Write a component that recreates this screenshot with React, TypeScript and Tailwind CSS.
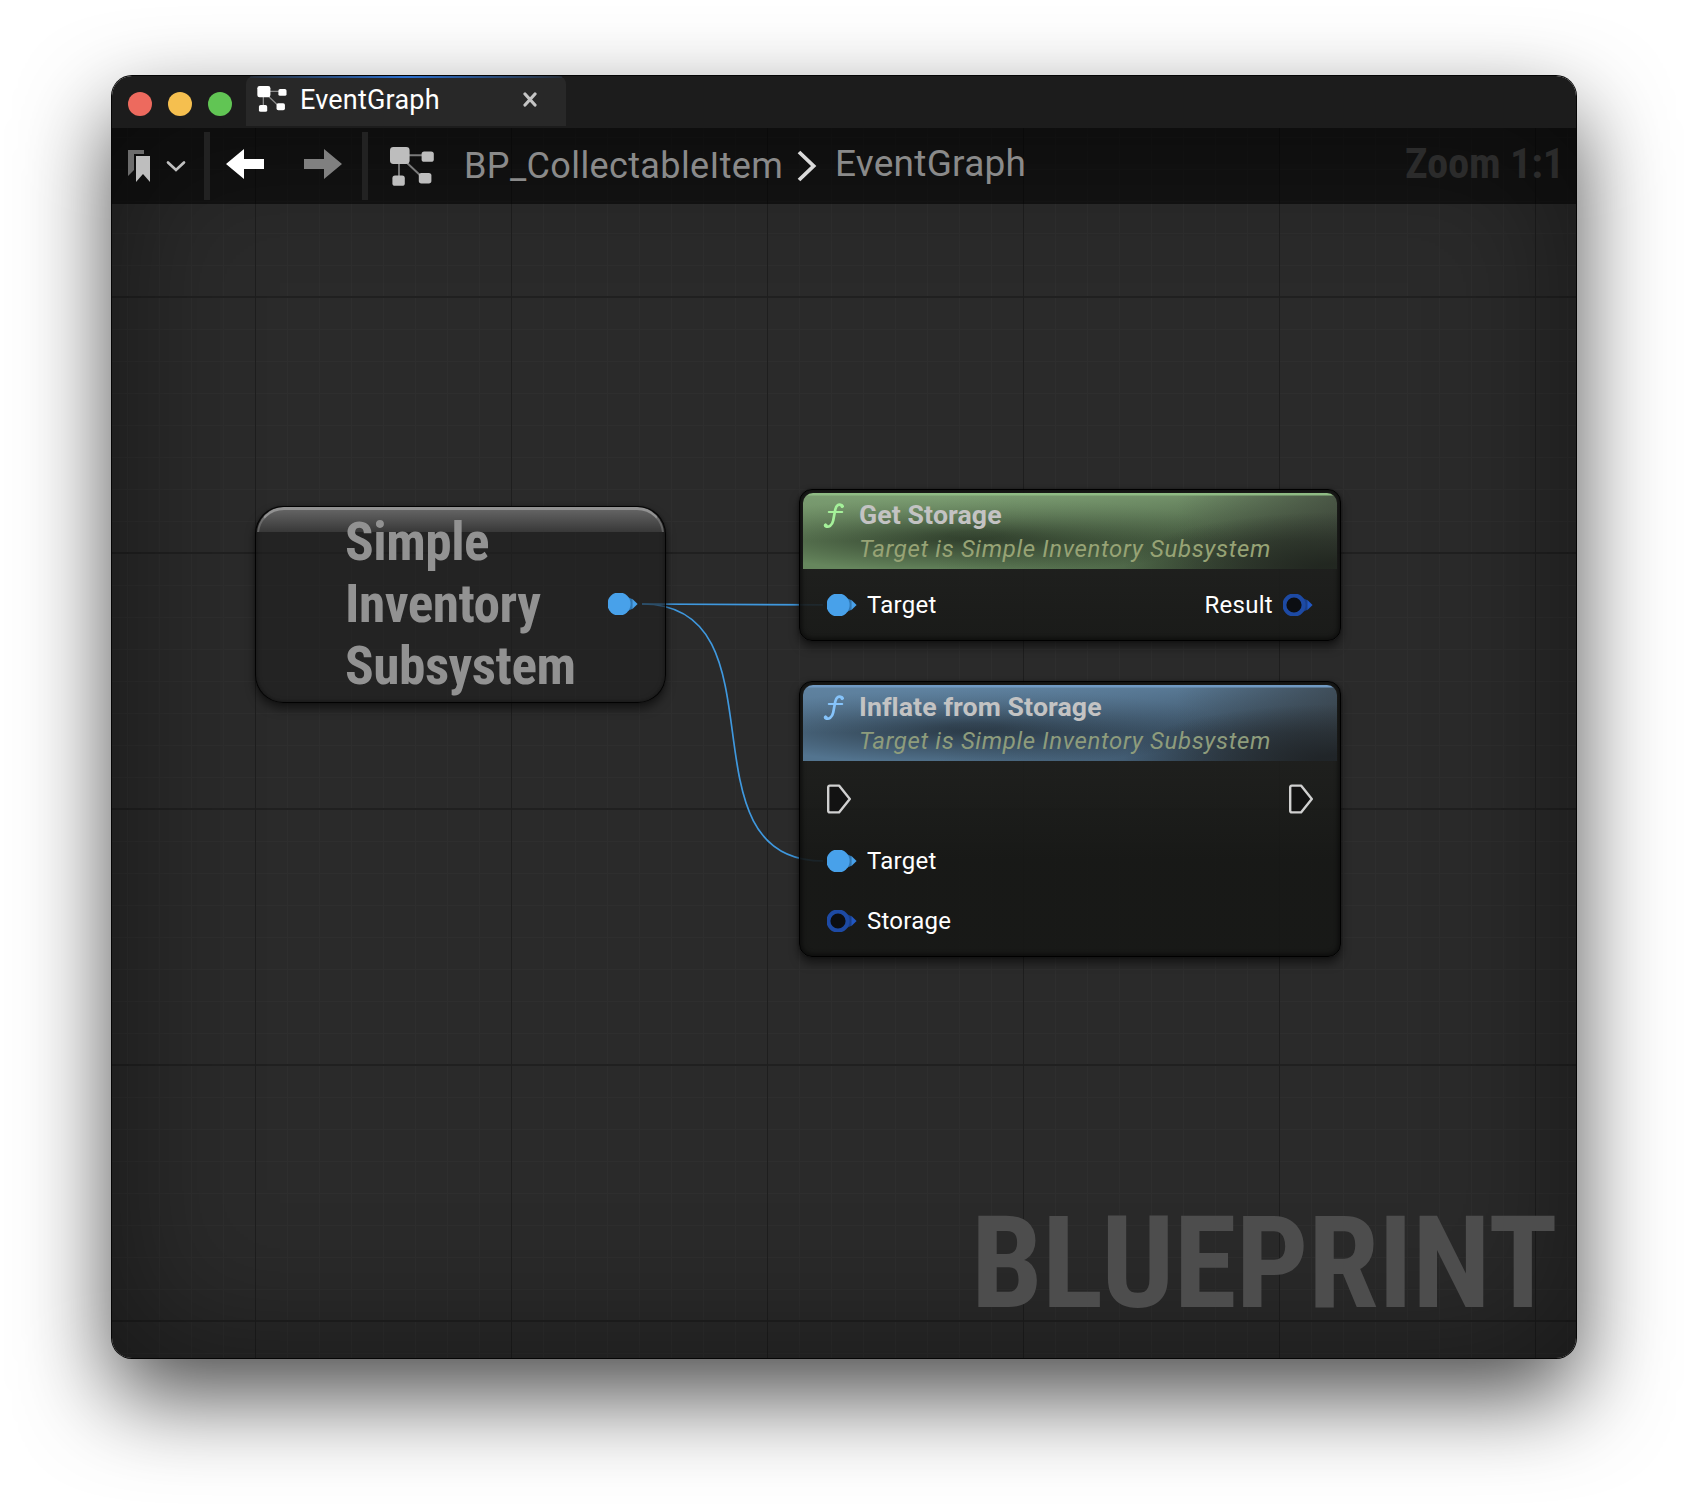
import type { ReactNode } from 'react';

function GraphIcon({ className, line }: { className: string; line: string }) {
  return (
    <svg viewBox="0 0 44 39" className={className} fill="currentColor">
      <path d="M9 16V30M16 8.2H34M15 14L32 30" stroke={line} strokeWidth="1.9" fill="none" />
      <rect x="0" y="0" width="19.6" height="17" rx="3.4" />
      <rect x="31.6" y="4.4" width="12.2" height="10.4" rx="2.6" />
      <rect x="2.4" y="28.6" width="12.4" height="10.2" rx="2.6" />
      <rect x="28.8" y="26" width="12.6" height="10.4" rx="2.6" />
    </svg>
  );
}

function Pin({ filled = false }: { filled?: boolean }) {
  return (
    <svg width="30" height="22" viewBox="0 0 30 22" className="shrink-0 overflow-hidden">
      {filled ? (
        <>
          <path d="M20 4.2L24 6V16L20 17.8Z" fill="#2f77b3" />
          <circle cx="11" cy="11" r="11.6" fill="#48a1ea" />
          <path d="M24.2 5.8L29.6 11L24.2 16.2Z" fill="#48a1ea" />
        </>
      ) : (
        <>
          <path d="M20 4.2L24 6V16L20 17.8Z" fill="#183f8c" />
          <circle cx="11" cy="11" r="9.6" fill="#0c0e12" stroke="#1d4aa4" strokeWidth="4" />
          <path d="M24.2 5.8L29.6 11L24.2 16.2Z" fill="#2157c2" />
        </>
      )}
    </svg>
  );
}

function ExecPin() {
  return (
    <svg width="24" height="30" viewBox="0 0 24 30" className="shrink-0">
      <path
        d="M1.2 3.2Q1.2 1.6 2.8 1.6H12L22.8 15L12 28.4H2.8Q1.2 28.4 1.2 26.8Z"
        fill="#121212"
        stroke="#d0d0d0"
        strokeWidth="2.4"
        strokeLinejoin="round"
      />
    </svg>
  );
}

function FunctionIcon({ className }: { className: string }) {
  return (
    <svg width="22" height="26" viewBox="0 0 22 26" className={className} fill="none" stroke="currentColor" strokeLinecap="round">
      <path d="M19 2.4C15.6 0.4 13.2 2.2 12.3 6.6L10.2 17.6C9.2 22.6 5.6 25 2.4 23" strokeWidth="2.7" />
      <path d="M5.8 9H19.2" strokeWidth="2.1" />
      <circle cx="19.2" cy="3.4" r="1.3" fill="currentColor" />
      <circle cx="2.6" cy="22.2" r="1.4" fill="currentColor" />
    </svg>
  );
}

function FunctionNode({
  className,
  header,
  icon,
  subtitle,
  title,
  children,
}: {
  className: string;
  header: string;
  icon: string;
  subtitle: string;
  title: string;
  children: ReactNode;
}) {
  return (
    <section
      className={`absolute w-[542px] rounded-[13px] border border-black bg-[linear-gradient(rgba(29,30,28,0.9)_80px,rgba(22,23,21,0.9)_180px)] p-[3px] shadow-[0_6px_10px_rgba(0,0,0,0.5),0_0_3px_rgba(0,0,0,0.4),inset_0_0_4px_2px_rgba(0,0,0,0.5)] ${className}`}
    >
      <header className={`flex h-[76px] rounded-t-[10px] pl-5 pt-[6px] ${header}`}>
        <FunctionIcon className={`mt-1 shrink-0 ${icon}`} />
        <div className="ml-[14px] whitespace-nowrap">
          <h2 className="text-[26.67px] font-bold leading-8 tracking-[0.1px] text-[#c3c3c3]">{title}</h2>
          <p className={`mt-[2px] text-2xl italic leading-8 tracking-[0.65px] ${subtitle}`}>Target is Simple Inventory Subsystem</p>
        </div>
      </header>
      {children}
    </section>
  );
}

function PinLabel({ label, filled }: { label: string; filled?: boolean }) {
  return (
    <div className="flex h-8 items-center">
      <Pin filled={filled} />
      <span className="ml-[10px] text-2xl leading-8 tracking-[0.25px] text-white">{label}</span>
    </div>
  );
}

function TitleBar() {
  return (
    <div className="flex h-[52px] bg-[#1c1c1c]">
      <div className="flex w-[134px] shrink-0 gap-4 pl-4 pt-4">
        <span className="size-6 rounded-full bg-[#ed6a5e]" />
        <span className="size-6 rounded-full bg-[#f5bf4f]" />
        <span className="size-6 rounded-full bg-[#61c554]" />
      </div>
      <div className="h-[50px] w-80 rounded-t-lg bg-[#282828]">
        <div className="mx-1 h-[2px] bg-linear-to-r from-[#2a6fd0]/10 via-[#2a6fd0] to-[#2a6fd0]/10" />
        <div className="flex items-start pl-[11px]">
          <GraphIcon className="mt-2 h-[26px] w-[30px] text-white" line="#8c8c8c" />
          <span className="ml-[13px] mt-[6px] w-[223px] text-[27px] leading-8 tracking-[0.2px] text-white">EventGraph</span>
          <svg width="14" height="15" viewBox="0 0 14 15" className="mt-[14px]" stroke="#c4c4c4" strokeWidth="3.2" strokeLinecap="round">
            <path d="M2 2L12 13M12 2L2 13" />
          </svg>
        </div>
      </div>
    </div>
  );
}

function Toolbar() {
  return (
    <div className="flex h-[76px] items-start bg-black/55">
      <svg width="22" height="32" viewBox="0 0 22 32" className="ml-4 mt-[22px] shrink-0">
        <path d="M0 0H16V4H6V20L0 26Z" fill="#6c6c6c" />
        <path d="M8 6H22V32L15 24L8 32Z" fill="#bebebe" />
      </svg>
      <svg width="20" height="12" viewBox="0 0 20 12" className="ml-4 mt-8 shrink-0" fill="none" stroke="#c0c0c0" strokeWidth="2.7" strokeLinecap="round">
        <path d="M2 2.4L10 10L18 2.4" />
      </svg>
      <span className="ml-[18px] mt-1 h-[68px] w-[6px] shrink-0 bg-[#222222]" />
      <svg width="38" height="30" viewBox="0 0 38 30" className="ml-4 mt-[21px] shrink-0" fill="#ffffff">
        <path d="M0 15L18 0V10H38V20H18V30Z" />
      </svg>
      <svg width="38" height="30" viewBox="0 0 38 30" className="ml-10 mt-[21px] shrink-0" fill="#808080">
        <path d="M38 15L20 0V10H0V20H20V30Z" />
      </svg>
      <span className="ml-5 mt-1 h-[68px] w-[6px] shrink-0 bg-[#222222]" />
      <GraphIcon className="ml-[22px] mt-[19px] h-[39px] w-11 shrink-0 text-[#bdbdbd]" line="#7a7a7a" />
      <span className="ml-[30px] mt-[14px] w-[332px] shrink-0 text-[36px] leading-[48px] tracking-[0.38px] text-[#8a8a8a]">BP_CollectableItem</span>
      <svg width="22" height="32" viewBox="0 0 22 32" className="mt-[22px] shrink-0" fill="none" stroke="#dadada" strokeWidth="3.8">
        <path d="M3 2L17.6 16L3 30" />
      </svg>
      <span className="ml-[17px] mt-3 shrink-0 text-[37px] leading-[48px] tracking-[0.25px] text-[#8a8a8a]">EventGraph</span>
      <span className="ml-auto mr-3 mt-[11px] shrink-0 font-['Roboto_Condensed'] text-[42.67px] font-bold leading-[48px] tracking-[-0.25px] text-[#2b2b2b]">
        Zoom 1:1
      </span>
    </div>
  );
}

function GraphCanvas() {
  return (
    <main className="relative h-[1230px] bg-[#2a2a2a] bg-[linear-gradient(90deg,#1e1e1e_1px,transparent_1px),linear-gradient(#202020_2px,transparent_2px),linear-gradient(90deg,#2e2e2e_1px,transparent_1px),linear-gradient(#2e2e2e_1px,transparent_1px)] bg-[size:256px_256px,256px_256px,32px_32px,32px_32px] bg-[position:143px_0,0_168px,15px_0,0_9px] shadow-[inset_0_0_140px_rgba(0,0,0,0.48)]">
      <Toolbar />

      <p className="absolute bottom-5 right-[19px] font-['Roboto_Condensed'] text-[128px] font-bold leading-[150px] tracking-[-0.6px] text-[#4d4d4d]">
        BLUEPRINT
      </p>

      <svg width="200" height="280" viewBox="0 0 200 280" className="absolute left-[520px] top-[460px]" fill="none" stroke="#3f98de" strokeWidth="1.7">
        <path d="M10 16L191 16.8" />
        <path d="M10 16C157 16 44 273 191 273" />
      </svg>

      <section className="absolute left-[143px] top-[378px] h-[197px] w-[411px] overflow-hidden rounded-[28px] border-[1.5px] border-black/90 bg-[#202020]/60 shadow-[0_6px_10px_rgba(0,0,0,0.5),0_0_3px_rgba(0,0,0,0.3),inset_0_0_5px_rgba(0,0,0,0.5)]">
        <div className="absolute inset-x-0 top-0 h-[25px] overflow-hidden px-px">
          <div className="h-[80px] rounded-t-[27px] border-x-2 border-t-[3px] border-x-[#9c9c9c]/40 border-t-[#929292] bg-[linear-gradient(#636363,#363636_23px)]" />
        </div>
        <h2 className="relative ml-[89px] mt-1 w-60 font-['Roboto_Condensed'] text-[53.33px] font-bold leading-[62px] tracking-[-0.5px] text-[#929292]">
          Simple Inventory Subsystem
        </h2>
        <div className="absolute right-[27px] top-[86px]">
          <Pin filled />
        </div>
      </section>

      <FunctionNode
        title="Get Storage"
        className="left-[687px] top-[361px] h-[152px]"
        icon="text-[#a5f19a]"
        subtitle="text-[#97a375]"
        header="bg-[linear-gradient(#8fbb84_2px,transparent_3px),radial-gradient(ellipse_40%_75%_at_100%_100%,rgba(31,36,30,0.9)_10%,rgba(31,36,30,0)),linear-gradient(90deg,transparent_70%,rgba(62,70,59,0.75)),linear-gradient(rgba(131,165,121,0.75),rgba(120,155,110,0)_48px),radial-gradient(ellipse_48%_50%_at_32%_55%,rgba(38,50,35,0.85)_10%,rgba(38,50,35,0)),linear-gradient(90deg,#66865d_25%,#4c6446_65%,#333f2f)]"
      >
        <div className="flex justify-between px-6 pt-5">
          <PinLabel label="Target" filled />
          <div className="flex h-8 items-center">
            <span className="mr-[10px] text-2xl leading-8 tracking-[0.3px] text-white">Result</span>
            <Pin />
          </div>
        </div>
      </FunctionNode>

      <FunctionNode
        title="Inflate from Storage"
        className="left-[687px] top-[553px] h-[276px]"
        icon="text-[#86c4fb]"
        subtitle="text-[#8e9c7c]"
        header="bg-[linear-gradient(#7099c2_2px,transparent_3px),radial-gradient(ellipse_40%_75%_at_100%_100%,rgba(30,34,37,0.9)_10%,rgba(30,34,37,0)),linear-gradient(90deg,transparent_70%,rgba(56,66,74,0.75)),linear-gradient(rgba(100,136,167,0.75),rgba(90,125,155,0)_48px),radial-gradient(ellipse_48%_50%_at_32%_55%,rgba(36,48,58,0.85)_10%,rgba(36,48,58,0)),linear-gradient(90deg,#53748f_25%,#40596f_65%,#2d3942)]"
      >
        <div className="flex items-center justify-between px-6 pt-[23px]">
          <ExecPin />
          <ExecPin />
        </div>
        <div className="flex flex-col gap-7 pl-6 pt-[31px]">
          <PinLabel label="Target" filled />
          <PinLabel label="Storage" />
        </div>
      </FunctionNode>
    </main>
  );
}

export default function App() {
  return (
    <div className="h-[1506px] w-[1688px] overflow-hidden bg-white pl-28 pt-[76px] font-['Roboto',sans-serif]">
      <div className="h-[1282px] w-[1464px] rounded-[20px] shadow-[0_0_0_1px_#050505,0_38px_90px_rgba(0,0,0,0.7)]">
        <div className="overflow-hidden rounded-[20px]">
          <TitleBar />
          <GraphCanvas />
        </div>
      </div>
    </div>
  );
}
